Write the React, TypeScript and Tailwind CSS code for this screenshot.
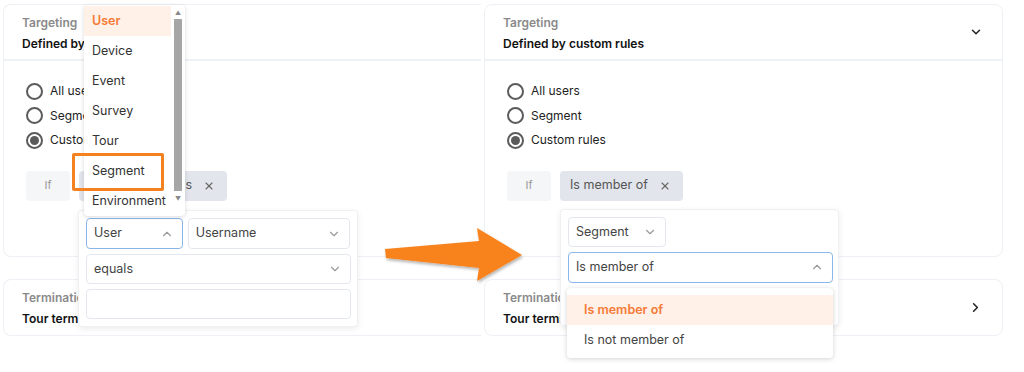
import { ChevronDown, ChevronUp, ChevronRight, X } from "lucide-react";

const font = { fontFamily: "Inter, 'Noto Sans', sans-serif" };

function Radio({ label, checked }: { label: string; checked?: boolean }) {
  return (
    <div className="flex h-[24.5px] items-center gap-[7px]">
      <span className="flex size-[17px] items-center justify-center rounded-full border-2 border-[#5b5b5b]">
        {checked && <span className="size-[9px] rounded-full bg-[#5b5b5b]" />}
      </span>
      <span className="text-[12px] text-[#222]">{label}</span>
    </div>
  );
}

function Select({
  value,
  open,
  className,
}: {
  value: string;
  open?: boolean;
  className: string;
}) {
  return (
    <div
      className={`flex h-[31px] items-center justify-between rounded-[4px] border bg-white pl-[7px] pr-[8px] text-[12.5px] text-[#444] ${
        open ? "border-[#8bb6ea]" : "border-[#e4e8ee]"
      } ${className}`}
    >
      <span>{value}</span>
      {open ? (
        <ChevronUp className="size-[14px] text-[#9a9a9a]" />
      ) : (
        <ChevronDown className="size-[14px] text-[#9a9a9a]" />
      )}
    </div>
  );
}

function TargetingCard({ chip, clipped }: { chip: string; clipped?: boolean }) {
  return (
    <div
      className={`flex h-[253px] flex-col border border-[#edf0f4] bg-white ${
        clipped ? "rounded-l-[8px] border-r-0" : "rounded-[8px]"
      }`}
    >
      <div className="flex h-[56px] items-center justify-between border-b-2 border-[#eef1f5] pl-[18px] pr-[19px]">
        <div className="flex flex-col gap-[3px] pt-[2px]">
          <span className="text-[12px] font-semibold text-[#8a8a8a]">Targeting</span>
          <span className="text-[12px] font-semibold text-[#111]">Defined by custom rules</span>
        </div>
        {!clipped && <ChevronDown className="size-[14px] text-[#222]" strokeWidth={2.5} />}
      </div>
      <div className="flex flex-col pl-[22px] pt-[18px]">
        <Radio label="All users" />
        <Radio label="Segment" />
        <Radio label="Custom rules" checked />
        <div className="mt-[18px] flex gap-[9px]">
          <div className="flex h-[30px] w-[44px] items-center justify-center rounded-[4px] bg-[#f5f6f8] text-[11px] text-[#999]">
            If
          </div>
          <div className="flex h-[30px] items-center gap-[11px] rounded-[4px] bg-[#e2e6ec] pl-[10px] pr-[12px] text-[12.5px] text-[#555]">
            <span>{chip}</span>
            <X className="size-[12px] text-[#666]" strokeWidth={2.2} />
          </div>
        </div>
      </div>
    </div>
  );
}

function TerminationCard({ clipped }: { clipped?: boolean }) {
  return (
    <div
      className={`flex h-[57px] items-center justify-between border border-[#edf0f4] bg-white pl-[18px] pr-[19px] ${
        clipped ? "rounded-l-[8px] border-r-0" : "rounded-[8px]"
      }`}
    >
      <div className="flex flex-col gap-[3px] pt-[1px]">
        <span className="text-[12px] font-semibold text-[#8a8a8a]">Termination</span>
        <span className="text-[12px] font-semibold text-[#111]">Tour termination rules</span>
      </div>
      {!clipped && <ChevronRight className="size-[15px] text-[#222]" strokeWidth={2.5} />}
    </div>
  );
}

const sources = ["User", "Device", "Event", "Survey", "Tour", "Segment", "Environment"];

export default function App() {
  return (
    <div className="relative h-[372px] w-[1024px] overflow-hidden bg-white" style={font}>
      <div className="flex gap-[3px] pl-[3px] pt-[4px]">
        <div className="flex w-[478px] flex-col gap-[22px]">
          <TargetingCard chip="Username equals" clipped />
          <TerminationCard clipped />
        </div>
        <div className="flex w-[519px] flex-col gap-[22px]">
          <TargetingCard chip="Is member of" />
          <TerminationCard />
        </div>
      </div>

      {/* left: rule popover */}
      <div className="absolute left-[78px] top-[210px] flex h-[117px] w-[280px] flex-col gap-[5px] rounded-[4px] border border-[#eef0f3] bg-white p-[7px] shadow-[0_2px_6px_rgba(0,0,0,0.08)]">
        <div className="flex gap-[5px]">
          <Select value="User" open className="w-[97px]" />
          <Select value="Username" className="w-[163px]" />
        </div>
        <Select value="equals" className="w-[265px]" />
        <div className="h-[31px] w-[265px] rounded-[4px] border border-[#e4e8ee]" />
      </div>

      {/* left: source list */}
      <div className="absolute left-[84px] top-[5px] flex h-[211px] w-[101px] rounded-[4px] bg-white pt-[1px] shadow-[0_1px_4px_rgba(0,0,0,0.15)]">
        <div className="flex flex-1 flex-col">
          {sources.map((s, i) => (
            <div
              key={s}
              className={`flex h-[30px] items-center pl-[8px] text-[12.5px] ${
                i === 0 ? "bg-[#fff0e8] font-semibold text-[#f57a35]" : "text-[#333]"
              }`}
            >
              {s}
            </div>
          ))}
        </div>
        <div className="flex w-[14px] flex-col items-center pt-[3px]">
          <span className="text-[6px] leading-[8px] text-[#888]">▲</span>
          <div className="mt-[2px] h-[172px] w-[8px] bg-[#a6a6a6]" />
          <span className="mt-[4px] text-[6px] leading-[8px] text-[#888]">▼</span>
        </div>
      </div>

      {/* highlight around Segment */}
      <div className="absolute left-[72px] top-[153px] h-[38px] w-[92px] rounded-[2px] border-[3px] border-[#f58220]" />

      {/* arrow */}
      <svg className="absolute left-[380px] top-[222px]" width="150" height="66" viewBox="0 0 150 66">
        <defs>
          <filter id="sh" x="-10%" y="-20%" width="130%" height="150%">
            <feDropShadow dx="1" dy="2" stdDeviation="1.5" floodColor="#000" floodOpacity="0.3" />
          </filter>
        </defs>
        <polygon
          points="5,27 99,19 97,6 142,33 97,59 99,46 6,36"
          fill="#f8821e"
          filter="url(#sh)"
        />
      </svg>

      {/* right: rule popover */}
      <div className="absolute left-[560px] top-[209px] flex h-[117px] w-[279px] flex-col gap-[5px] rounded-[4px] border border-[#eef0f3] bg-white p-[7px] shadow-[0_2px_6px_rgba(0,0,0,0.08)]">
        <Select value="Segment" className="w-[98px]" />
        <Select value="Is member of" open className="w-[265px]" />
        <div className="h-[31px] w-[265px] rounded-[4px] border border-[#e4e8ee]" />
      </div>

      {/* right: operator list */}
      <div className="absolute left-[567px] top-[288px] flex h-[70px] w-[266px] flex-col rounded-[4px] bg-white pt-[7px] shadow-[0_1px_5px_rgba(0,0,0,0.18)]">
        <div className="flex h-[30px] items-center bg-[#fff0e8] pl-[17px] text-[12.5px] font-semibold text-[#f57a35]">
          Is member of
        </div>
        <div className="flex h-[30px] items-center pl-[17px] text-[12.5px] text-[#444]">
          Is not member of
        </div>
      </div>
    </div>
  );
}
